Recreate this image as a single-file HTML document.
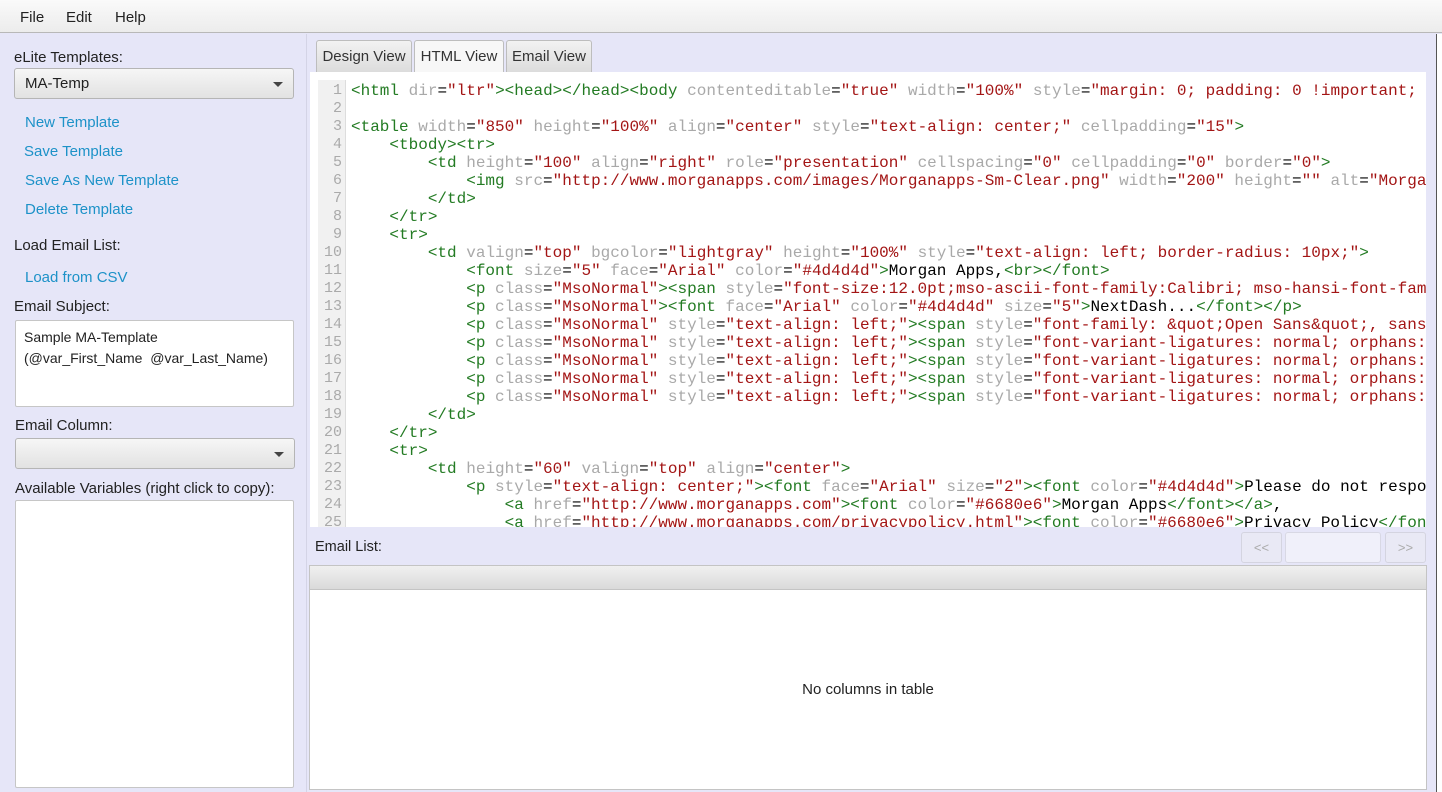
<!DOCTYPE html>
<html><head><meta charset="utf-8"><style>
*{box-sizing:border-box;margin:0;padding:0}
body{width:1442px;height:792px;background:#e6e6f8;font-family:"Liberation Sans",sans-serif;font-size:14.5px;color:#222;position:relative;overflow:hidden}
.abs{position:absolute}
.menu{left:0;top:0;width:1442px;height:33px;background:linear-gradient(#fafafa,#ececec);border-bottom:1px solid #b8b8b8}
.menu span{position:absolute;top:9px;font-size:15px}
.lbl{position:absolute;left:14px;font-size:15px;color:#222}
.lnk{position:absolute;left:25px;font-size:15px;color:#1d92c8}
.combo{position:absolute;left:14px;width:280px;height:31px;border:1px solid #b5b5b5;border-radius:3px;background:linear-gradient(#f6f6f6,#e2e2e2)}
.combo:after{content:"";position:absolute;right:10px;top:13px;border-left:5px solid transparent;border-right:5px solid transparent;border-top:5px solid #444}
.box{position:absolute;background:#fff;border:1px solid #c6c6c6;border-radius:2px}
.tab{position:absolute;top:40px;height:32px;border:1px solid #bdbdbd;border-bottom:none;border-radius:3px 3px 0 0;background:linear-gradient(#f2f2f2,#dcdcdc);font-size:15px;padding-top:7px;text-align:center;color:#333}
.code{left:310px;top:72px;width:1116px;height:455px;background:#fff;overflow:hidden}
.gut{position:absolute;left:8px;top:8px;width:28px;height:460px;background:#f1f1f1;border-right:1px solid #ddd}
.ln{position:absolute;left:6px;top:10px;width:26px;font-family:"Liberation Mono",monospace;font-size:15px;line-height:18px;color:#aaa;text-align:right;white-space:pre}
.src{position:absolute;left:41px;top:10px;font-family:"Liberation Mono",monospace;font-size:16px;line-height:18px;white-space:pre;color:#000}
.t{color:#237b23}.a{color:#a9a9a9}.v{color:#a31515}
</style></head><body>
<div class="abs menu"><span style="left:20px">File</span><span style="left:66px">Edit</span><span style="left:115px">Help</span></div>
<div class="abs" style="left:306px;top:34px;width:1px;height:758px;background:#d4d4e6"></div>
<div class="abs" style="left:1436px;top:34px;width:6px;height:758px;background:#fff;border-left:1px solid #555"></div>

<div class="lbl" style="top:49px">eLite Templates:</div>
<div class="combo" style="top:68px"><span style="position:absolute;left:10px;top:6px;font-size:15px">MA-Temp</span></div>
<div class="lnk" style="top:114px">New Template</div>
<div class="lnk" style="top:143px;left:24px">Save Template</div>
<div class="lnk" style="top:172px">Save As New Template</div>
<div class="lnk" style="top:201px">Delete Template</div>
<div class="lbl" style="top:237px">Load Email List:</div>
<div class="lnk" style="top:269px">Load from CSV</div>
<div class="lbl" style="top:298px">Email Subject:</div>
<div class="box" style="left:15px;top:320px;width:279px;height:87px;padding:6px 8px;font-size:14px;line-height:21px;white-space:nowrap;overflow:hidden">Sample MA-Template<br>(@var_First_Name&nbsp; @var_Last_Name)</div>
<div class="lbl" style="top:417px;left:15px">Email Column:</div>
<div class="combo" style="top:438px;left:15px;height:31px"></div>
<div class="lbl" style="top:480px;left:15px">Available Variables (right click to copy):</div>
<div class="box" style="left:15px;top:500px;width:279px;height:288px"></div>

<div class="tab" style="left:316px;width:96px">Design View</div>
<div class="tab" style="left:414px;width:90px;background:#f7f7f7;height:33px">HTML View</div>
<div class="tab" style="left:506px;width:86px">Email View</div>

<div class="abs code">
<div class="gut"></div>
<div class="ln">1
2
3
4
5
6
7
8
9
10
11
12
13
14
15
16
17
18
19
20
21
22
23
24
25</div>
<div class="src"><span class="t">&lt;html</span> <span class="a">dir</span>=<span class="v">"ltr"</span><span class="t">&gt;&lt;head&gt;&lt;/head&gt;&lt;body</span> <span class="a">contenteditable</span>=<span class="v">"true"</span> <span class="a">width</span>=<span class="v">"100%"</span> <span class="a">style</span>=<span class="v">"margin: 0; padding: 0 !important;</span>

<span class="t">&lt;table</span> <span class="a">width</span>=<span class="v">"850"</span> <span class="a">height</span>=<span class="v">"100%"</span> <span class="a">align</span>=<span class="v">"center"</span> <span class="a">style</span>=<span class="v">"text-align: center;"</span> <span class="a">cellpadding</span>=<span class="v">"15"</span><span class="t">&gt;</span>
    <span class="t">&lt;tbody&gt;&lt;tr&gt;</span>
        <span class="t">&lt;td</span> <span class="a">height</span>=<span class="v">"100"</span> <span class="a">align</span>=<span class="v">"right"</span> <span class="a">role</span>=<span class="v">"presentation"</span> <span class="a">cellspacing</span>=<span class="v">"0"</span> <span class="a">cellpadding</span>=<span class="v">"0"</span> <span class="a">border</span>=<span class="v">"0"</span><span class="t">&gt;</span>
            <span class="t">&lt;img</span> <span class="a">src</span>=<span class="v">"http://www.morganapps.com/images/Morganapps-Sm-Clear.png"</span> <span class="a">width</span>=<span class="v">"200"</span> <span class="a">height</span>=<span class="v">""</span> <span class="a">alt</span>=<span class="v">"Morganapps</span>
        <span class="t">&lt;/td&gt;</span>
    <span class="t">&lt;/tr&gt;</span>
    <span class="t">&lt;tr&gt;</span>
        <span class="t">&lt;td</span> <span class="a">valign</span>=<span class="v">"top"</span> <span class="a">bgcolor</span>=<span class="v">"lightgray"</span> <span class="a">height</span>=<span class="v">"100%"</span> <span class="a">style</span>=<span class="v">"text-align: left; border-radius: 10px;"</span><span class="t">&gt;</span>
            <span class="t">&lt;font</span> <span class="a">size</span>=<span class="v">"5"</span> <span class="a">face</span>=<span class="v">"Arial"</span> <span class="a">color</span>=<span class="v">"#4d4d4d"</span><span class="t">&gt;</span>Morgan Apps,<span class="t">&lt;br&gt;&lt;/font&gt;</span>
            <span class="t">&lt;p</span> <span class="a">class</span>=<span class="v">"MsoNormal"</span><span class="t">&gt;&lt;span</span> <span class="a">style</span>=<span class="v">"font-size:12.0pt;mso-ascii-font-family:Calibri; mso-hansi-font-family</span>
            <span class="t">&lt;p</span> <span class="a">class</span>=<span class="v">"MsoNormal"</span><span class="t">&gt;&lt;font</span> <span class="a">face</span>=<span class="v">"Arial"</span> <span class="a">color</span>=<span class="v">"#4d4d4d"</span> <span class="a">size</span>=<span class="v">"5"</span><span class="t">&gt;</span>NextDash...<span class="t">&lt;/font&gt;&lt;/p&gt;</span>
            <span class="t">&lt;p</span> <span class="a">class</span>=<span class="v">"MsoNormal"</span> <span class="a">style</span>=<span class="v">"text-align: left;"</span><span class="t">&gt;&lt;span</span> <span class="a">style</span>=<span class="v">"font-family: &amp;quot;Open Sans&amp;quot;, sans-</span>
            <span class="t">&lt;p</span> <span class="a">class</span>=<span class="v">"MsoNormal"</span> <span class="a">style</span>=<span class="v">"text-align: left;"</span><span class="t">&gt;&lt;span</span> <span class="a">style</span>=<span class="v">"font-variant-ligatures: normal; orphans: 2</span>
            <span class="t">&lt;p</span> <span class="a">class</span>=<span class="v">"MsoNormal"</span> <span class="a">style</span>=<span class="v">"text-align: left;"</span><span class="t">&gt;&lt;span</span> <span class="a">style</span>=<span class="v">"font-variant-ligatures: normal; orphans: 2</span>
            <span class="t">&lt;p</span> <span class="a">class</span>=<span class="v">"MsoNormal"</span> <span class="a">style</span>=<span class="v">"text-align: left;"</span><span class="t">&gt;&lt;span</span> <span class="a">style</span>=<span class="v">"font-variant-ligatures: normal; orphans: 2</span>
            <span class="t">&lt;p</span> <span class="a">class</span>=<span class="v">"MsoNormal"</span> <span class="a">style</span>=<span class="v">"text-align: left;"</span><span class="t">&gt;&lt;span</span> <span class="a">style</span>=<span class="v">"font-variant-ligatures: normal; orphans: 2</span>
        <span class="t">&lt;/td&gt;</span>
    <span class="t">&lt;/tr&gt;</span>
    <span class="t">&lt;tr&gt;</span>
        <span class="t">&lt;td</span> <span class="a">height</span>=<span class="v">"60"</span> <span class="a">valign</span>=<span class="v">"top"</span> <span class="a">align</span>=<span class="v">"center"</span><span class="t">&gt;</span>
            <span class="t">&lt;p</span> <span class="a">style</span>=<span class="v">"text-align: center;"</span><span class="t">&gt;&lt;font</span> <span class="a">face</span>=<span class="v">"Arial"</span> <span class="a">size</span>=<span class="v">"2"</span><span class="t">&gt;&lt;font</span> <span class="a">color</span>=<span class="v">"#4d4d4d"</span><span class="t">&gt;</span>Please do not respond
                <span class="t">&lt;a</span> <span class="a">href</span>=<span class="v">"http://www.morganapps.com"</span><span class="t">&gt;&lt;font</span> <span class="a">color</span>=<span class="v">"#6680e6"</span><span class="t">&gt;</span>Morgan Apps<span class="t">&lt;/font&gt;&lt;/a&gt;</span>,
                <span class="t">&lt;a</span> <span class="a">href</span>=<span class="v">"http://www.morganapps.com/privacypolicy.html"</span><span class="t">&gt;&lt;font</span> <span class="a">color</span>=<span class="v">"#6680e6"</span><span class="t">&gt;</span>Privacy Policy<span class="t">&lt;/font&gt;</span></div>
</div>

<div class="lbl" style="top:539px;left:315px;font-size:14.5px">Email List:</div>
<div class="abs" style="left:1241px;top:532px;width:41px;height:31px;border:1px solid #d4d4e0;border-radius:3px;background:#e9e9f5;color:#aaa;font-size:13px;text-align:center;padding-top:7px">&lt;&lt;</div>
<div class="abs" style="left:1285px;top:532px;width:96px;height:31px;border:1px solid #d8d8e4;border-radius:3px;background:#f0f0fa"></div>
<div class="abs" style="left:1385px;top:532px;width:41px;height:31px;border:1px solid #d4d4e0;border-radius:3px;background:#e9e9f5;color:#aaa;font-size:13px;text-align:center;padding-top:7px">&gt;&gt;</div>
<div class="abs" style="left:309px;top:565px;width:1118px;height:225px;background:#fff;border:1px solid #c4c4c4">
<div style="height:24px;background:linear-gradient(#f0f0f0,#dadada);border-bottom:1px solid #c4c4c4"></div>
<div style="position:absolute;left:0;right:0;top:115px;text-align:center;font-size:15px;color:#222">No columns in table</div>
</div>
</body></html>
